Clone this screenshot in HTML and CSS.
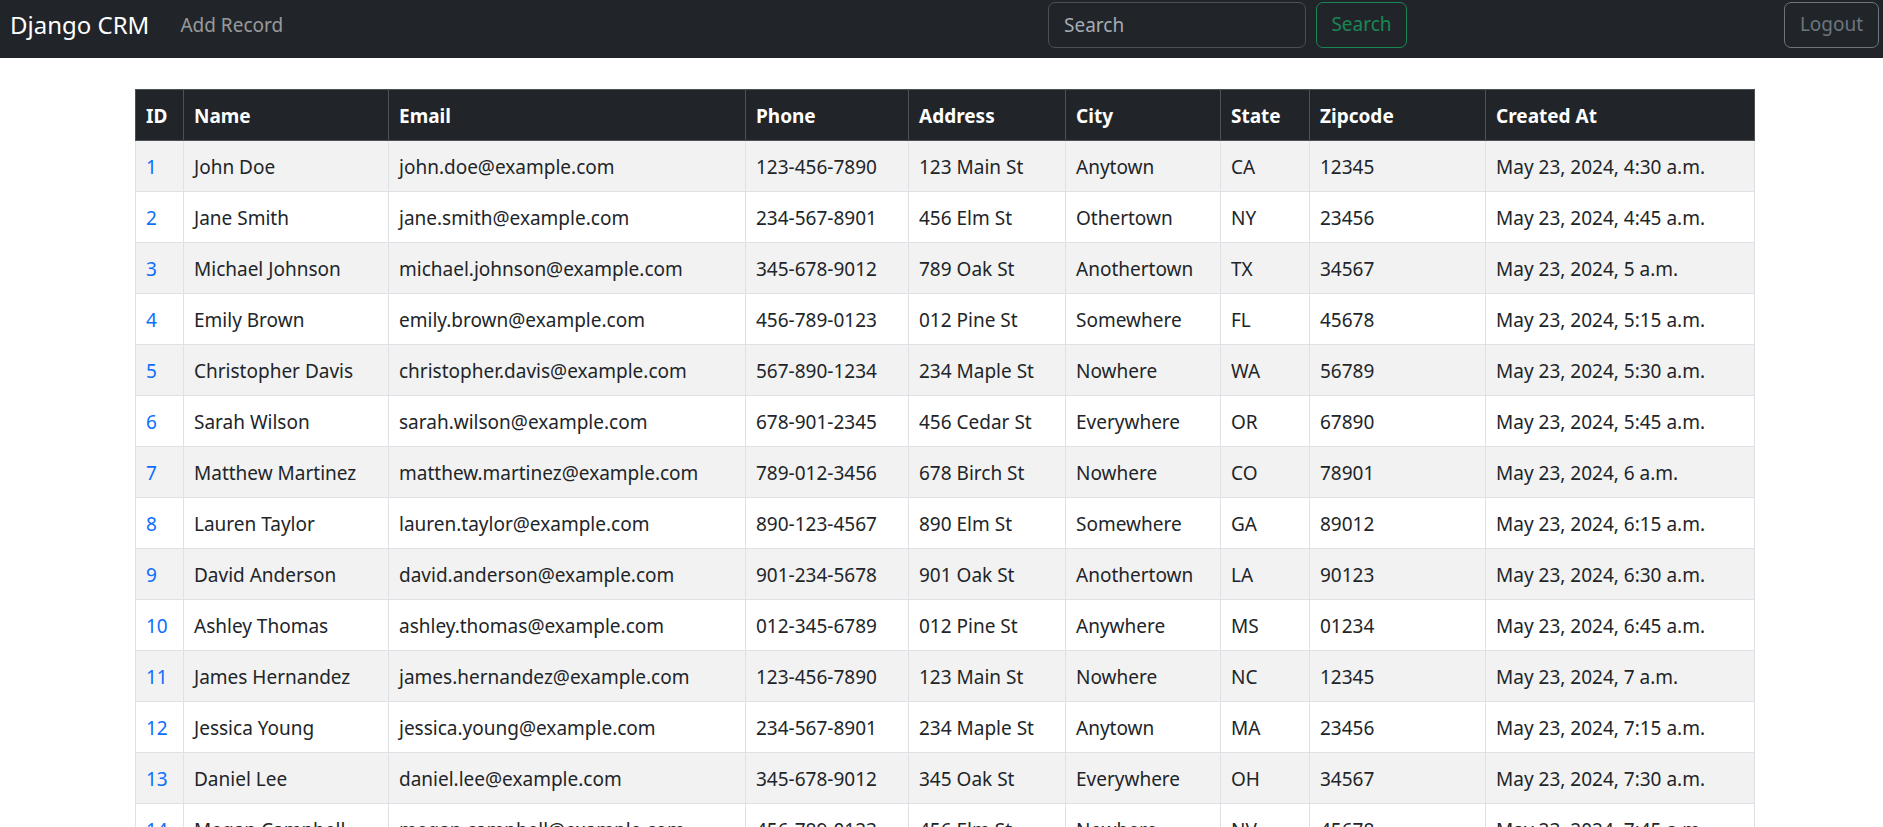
FILE: index.html
```html
<!DOCTYPE html>
<html lang="en">
<head>
<meta charset="utf-8">
<title>Django CRM</title>
<link rel="stylesheet" href="styles.css">
</head>
<body>
<nav class="navbar">
  <a class="brand" href="#">Django CRM</a>
  <a class="nav-link" href="#">Add Record</a>
  <form class="search-form">
    <input class="search-input" type="search" placeholder="Search">
    <button class="btn btn-search" type="button">Search</button>
  </form>
  <button class="btn btn-logout" type="button">Logout</button>
</nav>
<main class="container">
  <table class="records">
    <colgroup>
      <col class="c-id"><col class="c-name"><col class="c-email"><col class="c-phone"><col class="c-addr"><col class="c-city"><col class="c-state"><col class="c-zip"><col class="c-created">
    </colgroup>
    <thead>
      <tr><th>ID</th><th>Name</th><th>Email</th><th>Phone</th><th>Address</th><th>City</th><th>State</th><th>Zipcode</th><th>Created At</th></tr>
    </thead>
    <tbody>
      <tr><td><a href="#">1</a></td><td>John Doe</td><td>john.doe@example.com</td><td>123-456-7890</td><td>123 Main St</td><td>Anytown</td><td>CA</td><td>12345</td><td>May 23, 2024, 4:30 a.m.</td></tr>
      <tr><td><a href="#">2</a></td><td>Jane Smith</td><td>jane.smith@example.com</td><td>234-567-8901</td><td>456 Elm St</td><td>Othertown</td><td>NY</td><td>23456</td><td>May 23, 2024, 4:45 a.m.</td></tr>
      <tr><td><a href="#">3</a></td><td>Michael Johnson</td><td>michael.johnson@example.com</td><td>345-678-9012</td><td>789 Oak St</td><td>Anothertown</td><td>TX</td><td>34567</td><td>May 23, 2024, 5 a.m.</td></tr>
      <tr><td><a href="#">4</a></td><td>Emily Brown</td><td>emily.brown@example.com</td><td>456-789-0123</td><td>012 Pine St</td><td>Somewhere</td><td>FL</td><td>45678</td><td>May 23, 2024, 5:15 a.m.</td></tr>
      <tr><td><a href="#">5</a></td><td>Christopher Davis</td><td>christopher.davis@example.com</td><td>567-890-1234</td><td>234 Maple St</td><td>Nowhere</td><td>WA</td><td>56789</td><td>May 23, 2024, 5:30 a.m.</td></tr>
      <tr><td><a href="#">6</a></td><td>Sarah Wilson</td><td>sarah.wilson@example.com</td><td>678-901-2345</td><td>456 Cedar St</td><td>Everywhere</td><td>OR</td><td>67890</td><td>May 23, 2024, 5:45 a.m.</td></tr>
      <tr><td><a href="#">7</a></td><td>Matthew Martinez</td><td>matthew.martinez@example.com</td><td>789-012-3456</td><td>678 Birch St</td><td>Nowhere</td><td>CO</td><td>78901</td><td>May 23, 2024, 6 a.m.</td></tr>
      <tr><td><a href="#">8</a></td><td>Lauren Taylor</td><td>lauren.taylor@example.com</td><td>890-123-4567</td><td>890 Elm St</td><td>Somewhere</td><td>GA</td><td>89012</td><td>May 23, 2024, 6:15 a.m.</td></tr>
      <tr><td><a href="#">9</a></td><td>David Anderson</td><td>david.anderson@example.com</td><td>901-234-5678</td><td>901 Oak St</td><td>Anothertown</td><td>LA</td><td>90123</td><td>May 23, 2024, 6:30 a.m.</td></tr>
      <tr><td><a href="#">10</a></td><td>Ashley Thomas</td><td>ashley.thomas@example.com</td><td>012-345-6789</td><td>012 Pine St</td><td>Anywhere</td><td>MS</td><td>01234</td><td>May 23, 2024, 6:45 a.m.</td></tr>
      <tr><td><a href="#">11</a></td><td>James Hernandez</td><td>james.hernandez@example.com</td><td>123-456-7890</td><td>123 Main St</td><td>Nowhere</td><td>NC</td><td>12345</td><td>May 23, 2024, 7 a.m.</td></tr>
      <tr><td><a href="#">12</a></td><td>Jessica Young</td><td>jessica.young@example.com</td><td>234-567-8901</td><td>234 Maple St</td><td>Anytown</td><td>MA</td><td>23456</td><td>May 23, 2024, 7:15 a.m.</td></tr>
      <tr><td><a href="#">13</a></td><td>Daniel Lee</td><td>daniel.lee@example.com</td><td>345-678-9012</td><td>345 Oak St</td><td>Everywhere</td><td>OH</td><td>34567</td><td>May 23, 2024, 7:30 a.m.</td></tr>
      <tr><td><a href="#">14</a></td><td>Megan Campbell</td><td>megan.campbell@example.com</td><td>456-789-0123</td><td>456 Elm St</td><td>Nowhere</td><td>NV</td><td>45678</td><td>May 23, 2024, 7:45 a.m.</td></tr>
      <tr><td><a href="#">15</a></td><td>Kevin White</td><td>kevin.white@example.com</td><td>567-890-1234</td><td>567 Cedar St</td><td>Somewhere</td><td>UT</td><td>56789</td><td>May 23, 2024, 8 a.m.</td></tr>
    </tbody>
  </table>
</main>
</body>
</html>
```
FILE: styles.css
```css
* { box-sizing: border-box; }

html, body {
  margin: 0;
  padding: 0;
}

body {
  font-family: "Noto Sans", "Open Sans", "Liberation Sans", sans-serif;
  font-size: 19px;
  line-height: 1.5;
  color: #212529;
  background: #fff;
}

.navbar {
  display: flex;
  align-items: center;
  height: 58px;
  padding: 1px 4px 10px 10px;
  background: #212529;
}

.brand {
  font-size: 24px;
  line-height: 37px;
  color: #fff;
  text-decoration: none;
  margin-right: 31px;
}

.nav-link {
  font-size: 19px;
  line-height: 30px;
  color: rgba(255, 255, 255, 0.55);
  text-decoration: none;
}

.search-form {
  display: flex;
  margin-left: auto;
  gap: 10px;
}

.search-input {
  width: 258px;
  height: 46px;
  padding: 0 15px;
  font: inherit;
  font-size: 19px;
  color: #dee2e6;
  background: #212529;
  border: 1px solid #495057;
  border-radius: 7px;
  outline: none;
}

.search-input::placeholder {
  color: #a5acb3;
}

.btn {
  height: 46px;
  padding: 0 12px;
  font: inherit;
  font-size: 19px;
  background: transparent;
  border-radius: 7px;
  cursor: pointer;
}

.btn-search {
  width: 91px;
  color: #198754;
  border: 1px solid #198754;
}

.btn-logout {
  width: 95px;
  margin-left: 377px;
  color: #6c757d;
  border: 1px solid #6c757d;
}

.container {
  padding: 31px 129px 0 135px;
}

.records {
  width: 1619px;
  table-layout: fixed;
  border-collapse: collapse;
}

.c-id { width: 48px; }
.c-name { width: 205px; }
.c-email { width: 357px; }
.c-phone { width: 163px; }
.c-addr { width: 157px; }
.c-city { width: 155px; }
.c-state { width: 89px; }
.c-zip { width: 176px; }
.c-created { width: 269px; }

.records th,
.records td {
  padding: 11px 10px 9px;
  line-height: 30px;
  text-align: left;
  white-space: nowrap;
  overflow: hidden;
  border: 1px solid #dee2e6;
}

.records th {
  font-weight: 700;
  color: #fff;
  background: #212529;
  border-color: #4d5154;
}

.records tbody tr:nth-child(odd) td {
  background: #f2f2f2;
}

.records a {
  color: #0d6efd;
  text-decoration: none;
}
```
